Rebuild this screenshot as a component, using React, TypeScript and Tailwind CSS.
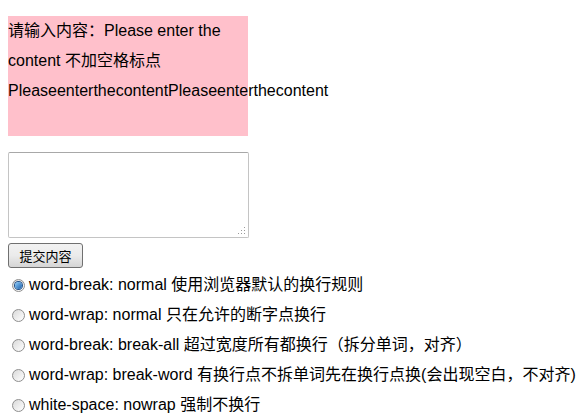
import { useState } from "react";

const options = [
  { key: "normal", code: "word-break: normal", note: "使用浏览器默认的换行规则" },
  { key: "wrap", code: "word-wrap: normal", note: "只在允许的断字点换行" },
  { key: "all", code: "word-break: break-all", note: "超过宽度所有都换行（拆分单词，对齐）" },
  { key: "word", code: "word-wrap: break-word", note: "有换行点不拆单词先在换行点换(会出现空白，不对齐)" },
  { key: "nowrap", code: "white-space: nowrap", note: "强制不换行" },
];

function Radio({ checked }: { checked: boolean }) {
  return (
    <span className="relative inline-flex w-[13px] h-[13px] shrink-0 items-center justify-center rounded-full border border-[#8f8f8f] bg-gradient-to-br from-[#d9d9d9] to-[#ffffff]">
      {checked && (
        <span className="w-[7px] h-[7px] rounded-full bg-gradient-to-br from-[#8fd0ff] to-[#1a5fa8] ring-1 ring-[#1f4f88]" />
      )}
    </span>
  );
}

export default function App() {
  const [mode, setMode] = useState("normal");

  return (
    <div className="p-2 text-[16px] text-black font-['Liberation_Sans','Noto_Sans_CJK_SC',sans-serif]">
      <div className="mt-2 w-[240px] h-[120px] bg-[#ffc0cb] leading-[30px]">
        请输入内容：Please enter the content 不加空格标点 PleaseenterthecontentPleaseenterthecontent
      </div>

      <div className="relative mt-4 w-[241px] h-[86px]">
        <textarea className="block w-full h-full resize-none rounded-[2px] border border-[#c4c4c4] border-t-[#a8a8a8] bg-white outline-none" />
        <svg className="absolute right-[3px] bottom-[3px]" width="9" height="9" viewBox="0 0 9 9">
          <rect x="7" y="1" width="1" height="1" fill="#9a9a9a" />
          <rect x="4" y="4" width="1" height="1" fill="#9a9a9a" />
          <rect x="7" y="4" width="1" height="1" fill="#9a9a9a" />
          <rect x="1" y="7" width="1" height="1" fill="#9a9a9a" />
          <rect x="4" y="7" width="1" height="1" fill="#9a9a9a" />
          <rect x="7" y="7" width="1" height="1" fill="#9a9a9a" />
        </svg>
      </div>

      <button className="mt-[5px] block w-[75px] h-[25px] rounded-[3px] border border-[#707070] bg-gradient-to-b from-[#f2f2f2] via-[#ebebeb] to-[#d5d5d5] text-[13px] leading-none text-black font-['Noto_Sans_CJK_SC',sans-serif]">
        提交内容
      </button>

      <div className="mt-[2px] leading-[30px]">
        {options.map((o) => (
          <label
            key={o.key}
            onClick={() => setMode(o.key)}
            className="flex items-center gap-[4px] pl-[4px] whitespace-nowrap"
          >
            <Radio checked={mode === o.key} />
            <span>
              {o.code} {o.note}
            </span>
          </label>
        ))}
      </div>
    </div>
  );
}
